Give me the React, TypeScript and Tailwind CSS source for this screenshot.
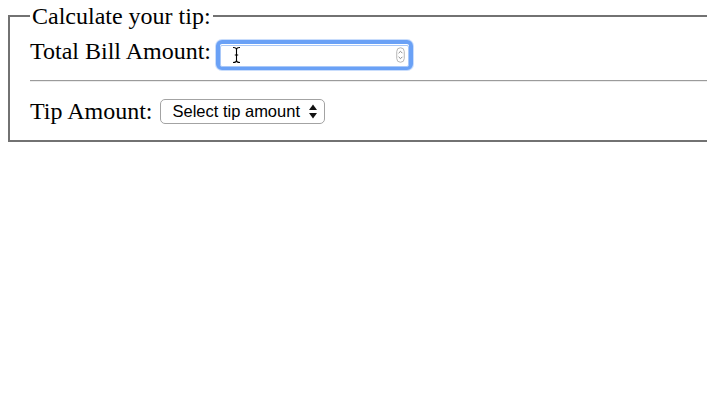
import React from "react";

export default function App() {
  return (
    <div className="w-full h-[420px] overflow-hidden bg-white pt-[3px] text-black font-['Liberation_Serif','Times_New_Roman',serif]">
      <fieldset className="ml-2 w-[740px] border-2 border-[#727272] px-[20px] pb-[16px]">
        <legend className="px-[2px] text-[24px] leading-[26px]">Calculate your tip:</legend>
        <div className="mt-[8px] flex items-start gap-[5px]">
          <label className="mt-[1px] text-[24px] leading-[26px]">Total Bill Amount:</label>
          <div className="relative mt-[3px] h-[30px] w-[197px] rounded-[6px] border-[4px] border-[#6aa1f6] bg-white shadow-[0_0_0_1px_#c9ddfc]">
            <input
              type="text"
              className="h-full w-full rounded-[2px] border border-[#a9c8f8] bg-white outline-none"
              aria-label="Total Bill Amount"
            />
            <svg className="pointer-events-none absolute left-[176px] top-[3px]" width="9" height="16" viewBox="0 0 9 16">
              <rect x="0.75" y="0.75" width="7.5" height="14.5" rx="3.75" fill="#fff" stroke="#b5b5b5" strokeWidth="1" />
              <path d="M2.6 6.2 L4.5 4.3 L6.4 6.2" fill="none" stroke="#8a8a8a" strokeWidth="1" />
              <path d="M2.6 9.8 L4.5 11.7 L6.4 9.8" fill="none" stroke="#8a8a8a" strokeWidth="1" />
            </svg>
            <svg className="pointer-events-none absolute left-[12px] top-[2px]" width="9" height="18" viewBox="0 0 9 18">
              <path d="M1 1.5 Q4.5 1.5 4.5 3.5 L4.5 14.5 Q4.5 16.5 1 16.5 M8 1.5 Q4.5 1.5 4.5 3.5 M4.5 14.5 Q4.5 16.5 8 16.5 M2.8 9 L6.2 9" fill="none" stroke="#fff" strokeWidth="3" strokeLinecap="round" />
              <path d="M1 1.5 Q4.5 1.5 4.5 3.5 L4.5 14.5 Q4.5 16.5 1 16.5 M8 1.5 Q4.5 1.5 4.5 3.5 M4.5 14.5 Q4.5 16.5 8 16.5 M2.8 9 L6.2 9" fill="none" stroke="#000" strokeWidth="1.1" />
            </svg>
          </div>
        </div>
        <hr className="mt-[10px] h-[2px] border-0 border-t border-b border-t-[#9b9b9b] border-b-[#ececec]" />
        <div className="mt-[16px] flex items-center gap-[7px]">
          <label className="text-[24px] leading-[26px]">Tip Amount:</label>
          <div className="relative h-[25px] w-[165px]">
            <select
              className="h-full w-full appearance-none rounded-[5px] border-[1.5px] border-[#a3a3a3] bg-white pl-[12px] font-['Liberation_Sans',Arial,sans-serif] text-[16.5px] leading-[20px] text-black outline-none"
              defaultValue=""
              aria-label="Tip Amount"
            >
              <option value="">Select tip amount</option>
            </select>
            <svg className="pointer-events-none absolute left-[148px] top-[5px]" width="10" height="15" viewBox="0 0 10 15">
              <path d="M5 0.5 L9 6 L1 6 Z" fill="#111" />
              <path d="M5 14.5 L9 9 L1 9 Z" fill="#111" />
            </svg>
          </div>
        </div>
      </fieldset>
    </div>
  );
}
